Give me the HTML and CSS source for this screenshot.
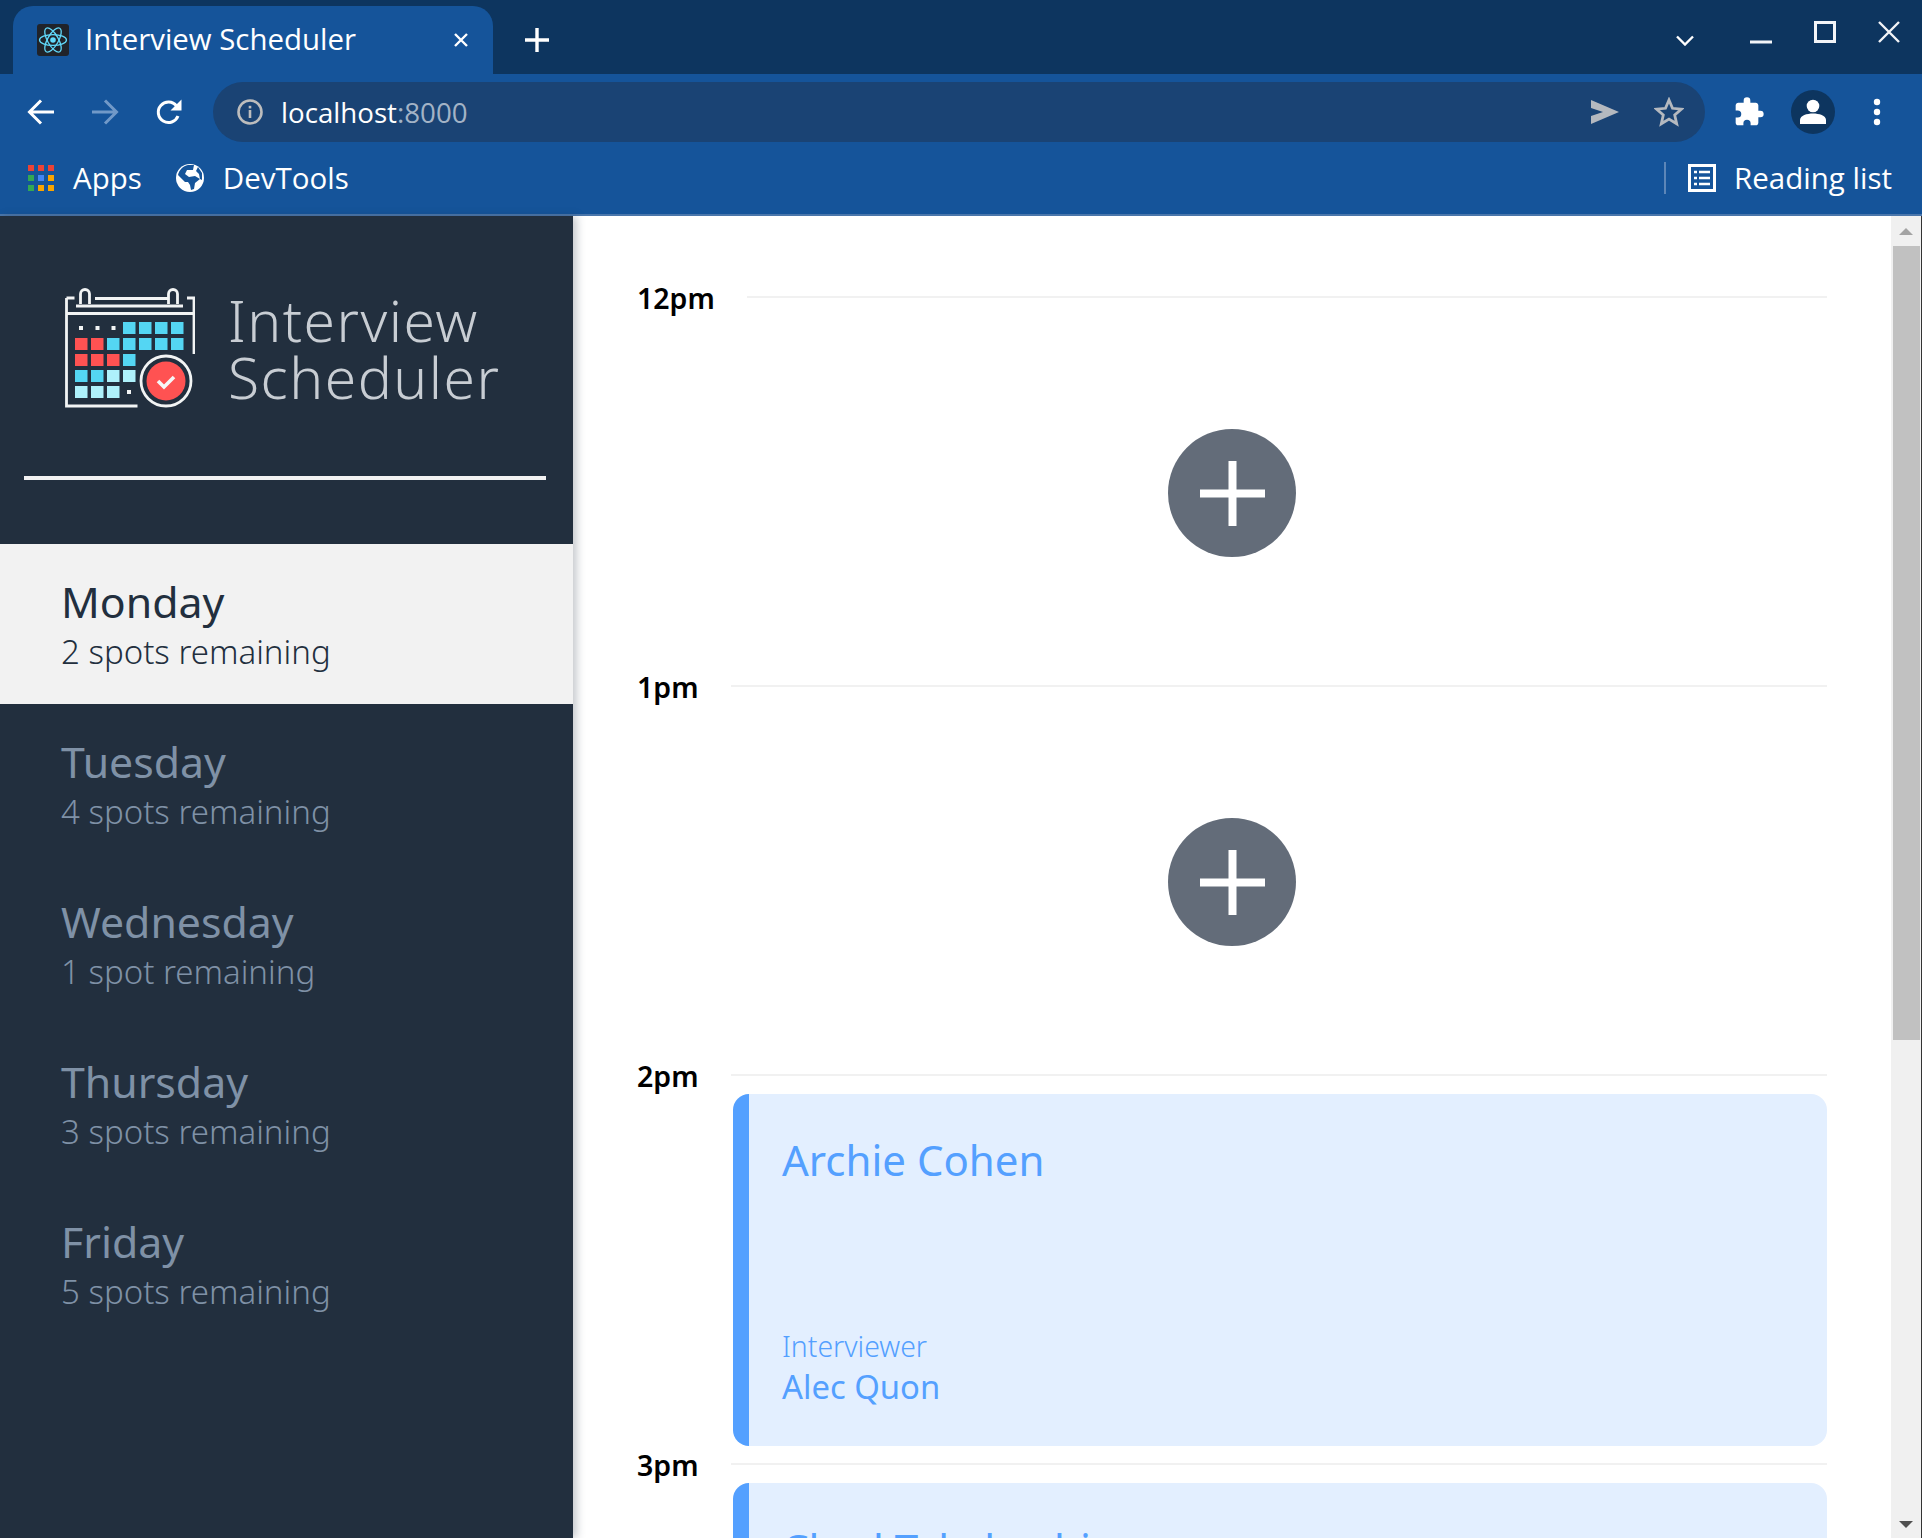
FILE: index.html
```html
<!DOCTYPE html>
<html lang="en">
<head>
<meta charset="utf-8">
<title>Interview Scheduler</title>
<link rel="stylesheet" href="styles.css">
</head>
<body>
<header class="chrome">
  <div class="tabstrip">
    <div class="tab">
      <svg class="favicon" viewBox="0 0 32 32"><rect width="32" height="32" rx="3" fill="#20232a"/><g fill="none" stroke="#61dafb" stroke-width="1.3"><ellipse cx="16" cy="16" rx="13.5" ry="5.4"/><ellipse cx="16" cy="16" rx="13.5" ry="5.4" transform="rotate(60 16 16)"/><ellipse cx="16" cy="16" rx="13.5" ry="5.4" transform="rotate(120 16 16)"/></g><circle cx="16" cy="16" r="2.8" fill="#61dafb"/></svg>
      <span class="tab-title">Interview Scheduler</span>
      <svg class="tab-close" viewBox="0 0 16 16"><path d="M2 2l12 12M14 2L2 14" stroke="#fff" stroke-width="2.4"/></svg>
    </div>
    <svg class="new-tab" viewBox="0 0 24 24"><path d="M12 0v24M0 12h24" stroke="#fff" stroke-width="3.4"/></svg>
    <div class="strip-controls">
      <svg class="ctl-chevron" viewBox="0 0 18 11"><path d="M1 1.500l8 8 8-8" fill="none" stroke="#fff" stroke-width="2.400"/></svg>
      <svg class="ctl-min" viewBox="0 0 22 4"><rect width="22" height="3" y="0.500" fill="#f2f4f7"/></svg>
      <svg class="ctl-max" viewBox="0 0 22 22"><rect x="1.500" y="1.500" width="19" height="19" fill="none" stroke="#f2f4f7" stroke-width="3"/></svg>
      <svg class="ctl-close" viewBox="0 0 22 22"><path d="M1 1l20 20M21 1L1 21" stroke="#f2f4f7" stroke-width="2.400"/></svg>
    </div>
  </div>
  <div class="toolbar">
    <svg class="nav-icon nav-back" viewBox="0 0 28 28"><path d="M27 14H3M14 2.500L2.500 14 14 25.500" fill="none" stroke="#fff" stroke-width="3"/></svg>
    <svg class="nav-icon nav-forward" viewBox="0 0 28 28"><path d="M1 14h24M14 2.500L25.500 14 14 25.500" fill="none" stroke="#7199c8" stroke-width="3"/></svg>
    <svg class="nav-icon nav-reload" viewBox="0 0 28 28"><path d="M23 18a10.200 10.200 0 1 1-1.500-10" fill="none" stroke="#fff" stroke-width="3"/><path d="M26.500 1.500v11h-11z" fill="#fff"/></svg>
    <div class="omnibox">
      <svg class="info-icon" viewBox="0 0 26 26"><circle cx="13" cy="13" r="11.500" fill="none" stroke="#bdbdbd" stroke-width="2.600"/><rect x="11.700" y="11" width="2.600" height="8" fill="#bdbdbd"/><rect x="11.700" y="6.800" width="2.600" height="2.600" fill="#bdbdbd"/></svg>
      <span class="url"><span class="url-host">localhost</span><span class="url-port">:8000</span></span>
      <span class="omni-spacer"></span>
      <svg class="send-icon" viewBox="0 0 28 24"><path d="M0 0l28 12L0 24l0-8 12-4-12-4z" fill="#b5b9bf"/></svg>
      <svg class="star-icon" viewBox="0 0 30 30"><path d="M15 3l3.500 8.300 9 .8-6.800 5.900 2 8.800-7.700-4.700-7.700 4.700 2-8.800L2.500 12.100l9-.8z" fill="none" stroke="#b5b9bf" stroke-width="2.800"/></svg>
    </div>
    <svg class="puzzle-icon" viewBox="0 0 24 24"><path d="M20.500 11H19V7c0-1.100-.9-2-2-2h-4V3.500a2.500 2.500 0 0 0-5 0V5H4c-1.100 0-2 .9-2 2v3.800h1.500a2.700 2.700 0 0 1 0 5.400H2V20c0 1.100.9 2 2 2h3.800v-1.500a2.700 2.700 0 0 1 5.400 0V22H17c1.100 0 2-.9 2-2v-4h1.500a2.500 2.500 0 0 0 0-5z" fill="#fff"/></svg>
    <div class="avatar"><svg viewBox="0 0 26 26"><circle cx="13" cy="7" r="6.300" fill="#fff"/><path d="M0 25v-4c0-4.500 7-6.500 13-6.500s13 2 13 6.500v4z" fill="#fff"/></svg></div>
    <svg class="kebab" viewBox="0 0 8 28"><circle cx="4" cy="4" r="3.200" fill="#fff"/><circle cx="4" cy="14" r="3.200" fill="#fff"/><circle cx="4" cy="24" r="3.200" fill="#fff"/></svg>
  </div>
  <div class="bookmarks">
    <svg class="apps-icon" viewBox="0 0 26 26">
      <rect width="6" height="6" fill="#ea4335"/><rect x="10" width="6" height="6" fill="#ea4335"/><rect x="20" width="6" height="6" fill="#ea4335"/>
      <rect y="10" width="6" height="6" fill="#34a853"/><rect x="10" y="10" width="6" height="6" fill="#4285f4"/><rect x="20" y="10" width="6" height="6" fill="#f9a400"/>
      <rect y="20" width="6" height="6" fill="#34a853"/><rect x="10" y="20" width="6" height="6" fill="#f9a400"/><rect x="20" y="20" width="6" height="6" fill="#f9a400"/>
    </svg>
    <span class="bm-label bm-apps">Apps</span>
    <svg class="globe-icon" viewBox="0 0 28 28"><circle cx="14" cy="14" r="14" fill="#fff"/><path d="M12 1C7 2 3 6 2 11l7 7h3l2 3 1 5 3-1 1-6 5-4-5-3-6 1-4-3 2-4 6 0 1-5zM26 9l-4-6-2 4 3 3 1 5 2 1z" fill="#15549a"/></svg>
    <span class="bm-label">DevTools</span>
    <span class="bm-spacer"></span>
    <span class="bm-divider"></span>
    <svg class="list-icon" viewBox="0 0 28 28"><rect x="1.500" y="1.500" width="25" height="25" fill="none" stroke="#fff" stroke-width="3"/><path d="M6 8h3M11 8h11M6 14h3M11 14h11M6 20h3M11 20h11" stroke="#fff" stroke-width="2.600"/></svg>
    <span class="bm-label">Reading list</span>
  </div>
</header>
<div class="app">
  <aside class="sidebar">
    <div class="brand">
      <svg class="logo" viewBox="0 0 130 120">
        <g fill="none" stroke="#f2f4f4" stroke-width="2.800">
          <path d="M1.500 10V118h71M1.500 10h8M30 10.500h73M122 10h7V66M1.500 25.500h127.500M11 18h107"/>
          <path d="M15.500 16V6a4.500 4.500 0 0 1 9 0V16M103.500 16V6a4.500 4.500 0 0 1 9 0V16"/>
          <circle cx="101" cy="93" r="25"/>
        </g>
        <g fill="#54d6f3">
          <rect x="58" y="34" width="12.500" height="12"/><rect x="74" y="34" width="12.500" height="12"/><rect x="90" y="34" width="12.500" height="12"/><rect x="106" y="34" width="12.500" height="12"/>
          <rect x="42" y="50" width="12.500" height="12"/><rect x="58" y="50" width="12.500" height="12"/><rect x="74" y="50" width="12.500" height="12"/><rect x="90" y="50" width="12.500" height="12"/><rect x="106" y="50" width="12.500" height="12"/>
          <rect x="58" y="66" width="12.500" height="12"/>
          <rect x="10" y="82" width="12.500" height="12"/><rect x="26" y="82" width="12.500" height="12"/>
        </g>
        <g fill="#ff5252">
          <rect x="10" y="50" width="12.500" height="12"/><rect x="26" y="50" width="12.500" height="12"/>
          <rect x="10" y="66" width="12.500" height="12"/><rect x="26" y="66" width="12.500" height="12"/><rect x="42" y="66" width="12.500" height="12"/>
          <circle cx="101" cy="93" r="19.500"/>
        </g>
        <g fill="#aef1fb">
          <rect x="42" y="82" width="12.500" height="12"/><rect x="58" y="82" width="12.500" height="12"/>
          <rect x="10" y="98" width="12.500" height="12"/><rect x="26" y="98" width="12.500" height="12"/><rect x="42" y="98" width="12.500" height="12"/>
        </g>
        <g fill="#f2f4f4">
          <rect x="14" y="38" width="4" height="4"/><rect x="30.500" y="38" width="4" height="4"/><rect x="46.500" y="38" width="4" height="4"/><rect x="62" y="102" width="4" height="4"/>
        </g>
        <path d="M93 93l6 6 10-10" fill="none" stroke="#f6f6f6" stroke-width="3.600"/>
      </svg>
      <div class="brand-name">Interview<br>Scheduler</div>
    </div>
    <hr class="brand-rule">
    <nav class="days">
      <div class="day is-selected"><div class="day-name">Monday</div><div class="day-spots">2 spots remaining</div></div>
      <div class="day"><div class="day-name">Tuesday</div><div class="day-spots">4 spots remaining</div></div>
      <div class="day"><div class="day-name">Wednesday</div><div class="day-spots">1 spot remaining</div></div>
      <div class="day"><div class="day-name">Thursday</div><div class="day-spots">3 spots remaining</div></div>
      <div class="day"><div class="day-name">Friday</div><div class="day-spots">5 spots remaining</div></div>
    </nav>
  </aside>
  <main class="schedule">
    <section class="slot">
      <div class="slot-head"><span class="slot-time">12pm</span><span class="slot-line"></span></div>
      <div class="slot-empty"><button class="add-btn" aria-label="Add"><svg viewBox="0 0 65 65"><path d="M32.500 0v65M0 32.500h65" stroke="#fff" stroke-width="8"/></svg></button></div>
    </section>
    <section class="slot">
      <div class="slot-head"><span class="slot-time">1pm</span><span class="slot-line"></span></div>
      <div class="slot-empty"><button class="add-btn" aria-label="Add"><svg viewBox="0 0 65 65"><path d="M32.500 0v65M0 32.500h65" stroke="#fff" stroke-width="8"/></svg></button></div>
    </section>
    <section class="slot">
      <div class="slot-head"><span class="slot-time">2pm</span><span class="slot-line"></span></div>
      <article class="card">
        <div class="card-name">Archie Cohen</div>
        <div class="card-label">Interviewer</div>
        <div class="card-person">Alec Quon</div>
      </article>
    </section>
    <section class="slot">
      <div class="slot-head"><span class="slot-time">3pm</span><span class="slot-line"></span></div>
      <article class="card">
        <div class="card-name">Chad Takahashi</div>
        <div class="card-label">Interviewer</div>
        <div class="card-person">Tori Malcolm</div>
      </article>
    </section>
  </main>
  <div class="scrollbar">
    <div class="scroll-arrow"><svg viewBox="0 0 14 7"><path d="M0 7L7 0l7 7z" fill="#a3a3a3"/></svg></div>
    <div class="scroll-thumb"></div>
    <div class="scroll-rest"></div>
    <div class="scroll-arrow scroll-arrow-end"><svg viewBox="0 0 14 7"><path d="M0 0l7 7 7-7z" fill="#505050"/></svg></div>
  </div>
</div>
</body>
</html>
```
FILE: styles.css
```css
* { box-sizing: border-box; }
html, body { margin: 0; height: 1538px; overflow: hidden; background: #fff; }
body { font-family: "Noto Sans", sans-serif; display: flex; flex-direction: column; }

.chrome { flex: none; color: #fff; }
.tabstrip { height: 74px; background: #0d355f; display: flex; align-items: flex-end; padding-left: 13px; }
.tab { width: 480px; height: 68px; background: #15549a; border-radius: 20px 20px 0 0; display: flex; align-items: center; padding: 0 24px; }
.favicon { width: 32px; height: 32px; flex: none; }
.tab-title { font-size: 29.4px; margin-left: 16px; flex: 1; white-space: nowrap; font-family: "Open Sans", sans-serif; line-height: 34px; margin-bottom: 3px; }
.tab-close { width: 16px; height: 16px; flex: none; }
.new-tab { width: 24px; height: 24px; margin: 0 0 22px 32px; }
.strip-controls { margin-left: auto; display: flex; align-items: flex-start; align-self: flex-start; height: 74px; width: 241px; }
.ctl-chevron { width: 18px; height: 11px; margin: 35px 0 0 -5px; flex: none; }
.ctl-min { width: 22px; height: 4px; margin: 40px 0 0 56px; flex: none; }
.ctl-max { width: 22px; height: 22px; margin: 21px 0 0 42px; flex: none; }
.ctl-close { width: 22px; height: 22px; margin: 21px 0 0 42px; flex: none; }

.toolbar { height: 68px; background: #15549a; display: flex; align-items: center; padding: 8px 0 0 27px; }
.nav-icon { width: 28px; height: 28px; flex: none; }
.nav-forward { margin-left: 36px; }
.nav-reload { margin-left: 36px; }
.omnibox { width: 1492px; height: 60px; margin-left: 30px; background: #1a4374; border-radius: 30px; display: flex; align-items: center; padding: 0 21px 0 24px; }
.info-icon { width: 26px; height: 26px; flex: none; }
.url { font-family: "Open Sans", sans-serif; font-size: 27.7px; margin-left: 18px; }
.url-port { color: #a3b3c6; }
.omni-spacer { flex: 1; }
.send-icon { width: 28px; height: 24px; }
.star-icon { width: 30px; height: 30px; margin-left: 35px; }
.puzzle-icon { width: 32px; height: 32px; margin-left: 28px; flex: none; }
.avatar { width: 44px; height: 44px; border-radius: 50%; background: #0d355f; margin-left: 26px; display: flex; align-items: center; justify-content: center; flex: none; }
.avatar svg { width: 26px; height: 26px; }
.kebab { width: 8px; height: 28px; margin-left: 38px; flex: none; }

.bookmarks { height: 74px; background: #15549a; border-bottom: 2px solid #4a76ab; display: flex; align-items: center; padding: 0 30px 0 28px; }
.apps-icon { width: 26px; height: 26px; flex: none; }
.bm-label { font-family: "Open Sans", sans-serif; font-size: 29.5px; white-space: nowrap; margin-bottom: 2px; }
.bm-apps { margin-left: 19px; margin-right: 34px; }
.globe-icon { width: 28px; height: 28px; margin-right: 19px; flex: none; }
.bm-spacer { flex: 1; }
.bm-divider { width: 2px; height: 32px; background: #5c86b8; margin-right: 22px; }
.list-icon { width: 28px; height: 28px; margin-right: 18px; flex: none; }

.app { flex: 1; display: flex; min-height: 0; }
.sidebar { width: 573px; flex: none; background: #222f3e; box-shadow: 4px 0 8px rgba(34,47,62,.25); position: relative; }
.brand { display: flex; padding: 72px 0 0 65px; height: 260px; }
.logo { width: 130px; height: 120px; flex: none; }
.brand-name { font-size: 57px; font-weight: 300; line-height: 57px; color: #c8cdd3; margin: 4px 0 0 33px; letter-spacing: 1.5px; white-space: nowrap; }
.brand-rule { border: 0; height: 4px; background: #f2f2f2; margin: 0 27px 0 24px; }
.days { margin-top: 64px; }
.day { height: 160px; padding: 31px 0 0 61px; color: #7f91a6; }
.day.is-selected { background: #f2f2f2; color: #222f3e; }
.day-name { font-size: 42.8px; line-height: 54px; }
.day-spots { font-size: 33px; font-weight: 300; line-height: 45px; }

.schedule { flex: 1; min-width: 0; padding: 61px 64px 0 64px; overflow: hidden; }
.slot { height: 389px; }
.slot-head { display: flex; align-items: flex-start; height: 39px; }
.slot-time { font-size: 28.5px; line-height: 42px; font-weight: 600; color: #000; margin-right: 32px; }
.slot-line { flex: 1; height: 2px; margin-top: 19px; background: #f1f1f1; }
.slot-empty { height: 352px; padding-top: 2px; display: flex; align-items: center; justify-content: center; }
.add-btn { width: 128px; height: 128px; border-radius: 50%; background: #636c79; border: 0; padding: 0; display: flex; align-items: center; justify-content: center; }
.add-btn svg { width: 65px; height: 65px; }
.card { height: 352px; margin-left: 96px; background: #e3efff; border-left: 16px solid #54a0ff; border-radius: 16px; color: #54a0ff; padding: 38px 0 0 33px; }
.card-name { font-size: 42px; line-height: 56px; }
.card-label { font-size: 28.4px; font-weight: 300; line-height: 38px; margin-top: 139px; }
.card-person { font-size: 32.8px; line-height: 44px; }

.scrollbar { width: 31px; flex: none; background: #f0f0f0; border-right: 1px solid #333; display: flex; flex-direction: column; align-items: center; margin-right: 0; }
.scroll-arrow { height: 30px; flex: none; display: flex; align-items: center; justify-content: center; width: 100%; }
.scroll-arrow-end { padding-top: 3px; }
.scroll-arrow svg { width: 14px; height: 7px; }
.scroll-thumb { width: 27px; height: 794px; background: #c1c1c1; flex: none; }
.scroll-rest { flex: 1; }
```
